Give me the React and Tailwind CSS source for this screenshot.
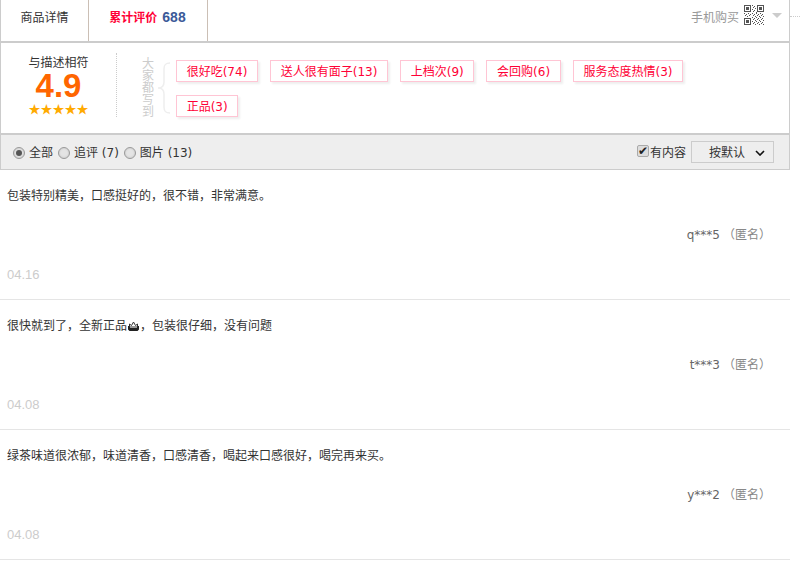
const TAGS = ['很好吃(74)', '送人很有面子(13)', '上档次(9)', '会回购(6)', '服务态度热情(3)', '正品(3)']

const REVIEWS = [
  { text: '包装特别精美，口感挺好的，很不错，非常满意。', user: 'q***5', date: '04.16' },
  { text: <>很快就到了，全新正品<Cake />，包装很仔细，没有问题</>, user: 't***3', date: '04.08' },
  { text: '绿茶味道很浓郁，味道清香，口感清香，喝起来口感很好，喝完再来买。', user: 'y***2', date: '04.08' },
]

// finder squares plus a rough scatter of modules
const QR_CELLS = [
  [8, 0], [10, 1], [9, 2], [11, 3], [8, 4], [10, 5], [9, 6], [12, 7], [0, 8], [2, 9], [4, 8], [6, 9], [8, 8], [10, 9],
  [12, 8], [14, 9], [16, 8], [18, 9], [1, 10], [3, 11], [5, 10], [9, 10], [11, 11], [13, 10], [15, 11], [17, 10], [19, 11],
  [8, 12], [10, 13], [12, 12], [14, 13], [16, 12], [18, 13], [9, 14], [11, 15], [13, 14], [15, 15], [17, 14], [19, 15],
  [8, 16], [10, 17], [12, 16], [14, 17], [16, 16], [18, 17], [9, 18], [11, 19], [13, 18], [15, 19], [17, 18], [19, 19],
]

function Cake() {
  return (
    <svg className="inline-block align-[-1px] mx-px" width="11" height="10" viewBox="0 0 11 10" fill="#222">
      <path d="M0 5h2v2h7V5h2v3.5L9.5 10h-8L0 8.5z" />
      <path d="M1.5 6V3l2 1.5L5.5 1l2 3.5 2-1.5v3z" fill="none" stroke="#333" />
    </svg>
  )
}

function QrCode() {
  const finder = (x, y) => (
    <g key={`${x}-${y}`}>
      <path d={`M${x} ${y}h7v7h-7z M${x + 1} ${y + 1}v5h5v-5z`} fillRule="evenodd" />
      <path d={`M${x + 2} ${y + 2}h3v3h-3z`} />
    </g>
  )
  return (
    <svg width="20" height="20" viewBox="0 0 20 20" fill="#555" shapeRendering="crispEdges">
      {finder(0, 0)}
      {finder(13, 0)}
      {finder(0, 13)}
      {QR_CELLS.map(([x, y]) => <rect key={`${x}:${y}`} x={x} y={y} width="1" height="1" />)}
    </svg>
  )
}

function Brace() {
  return (
    <svg width="14" height="52" viewBox="0 0 14 52" fill="none" stroke="#eee" strokeWidth="1.5">
      <path d="M13 1C8 1 7 3 7 7v13c0 4-2 6-6 6 4 0 6 2 6 6v13c0 4 1 6 6 6" />
    </svg>
  )
}

function Radio({ checked, label }) {
  return (
    <label className="flex items-center gap-[4px]">
      <span className="flex h-[12px] w-[12px] items-center justify-center rounded-full border border-[#999] bg-[#e4e4e4] shadow-[inset_0_0_2px_#bbb]">
        {checked && <span className="h-[6px] w-[6px] rounded-full bg-[#555]" />}
      </span>
      <span className="font-['DejaVu_Sans','Noto_Sans_CJK_SC',sans-serif]">{label}</span>
    </label>
  )
}

export default function App() {
  return (
    <div className="relative w-[800px] bg-white text-[12px] text-[#333] font-['Liberation_Sans','Noto_Sans_CJK_SC',sans-serif]">
      <div className="w-[790px]">

        {/* tabs */}
        <div className="flex h-[41px] items-stretch border-x border-[#ccc]">
          <div className="flex w-[88px] items-center justify-center border-r border-[#cbbfb5] pb-[6px]">商品详情</div>
          <div className="flex w-[119px] items-center justify-center gap-[5px] border-r border-[#cbbfb5] pb-[6px] pr-px font-bold text-[#ff0036]">
            累计评价 <span className="text-[14px] text-[#3b5998]">688</span>
          </div>
          <div className="ml-auto flex items-start gap-[5px] pt-[5px] pr-[7px] text-[#999]">
            <span className="mt-[4px]">手机购买</span>
            <QrCode />
            <span className="mt-[8px] ml-[3px] h-0 w-0 border-x-[5px] border-t-[5px] border-x-transparent border-t-[#ccc]" />
          </div>
        </div>

        {/* score and tag cloud */}
        <div className="flex h-[92px] border-x border-t-2 border-[#ccc] pt-[10px]">
          <div className="flex h-[64px] w-[116px] flex-col items-center border-r border-dotted border-[#ccc] pt-[2px]">
            <div className="leading-[16px]">与描述相符</div>
            <div className="text-[33px] font-bold leading-[30px] text-[#ff6600]">4.9</div>
            <div className="mt-[3px] text-[12px] leading-[12px] text-[#ffaa00]">★★★★★</div>
          </div>
          <div className="ml-[25px] mt-[5px] w-[12px] text-center text-[12px] leading-[12px] text-[#ccc]">大家都写到</div>
          <div className="ml-[3px] mt-[9px]"><Brace /></div>
          <div className="ml-[5px] flex w-[570px] flex-wrap content-start gap-x-[12px] gap-y-[13px] pt-[7px] font-['DejaVu_Sans','Noto_Sans_CJK_SC',sans-serif]">
            {TAGS.map(tag => (
              <span key={tag} className="flex h-[22px] items-center border border-[#ffc5d4] px-[9.7px] pt-px text-[#ff0036] shadow-[2px_2px_2px_#eee]">{tag}</span>
            ))}
          </div>
        </div>

        {/* filters */}
        <div className="flex h-[37px] items-center border-x border-t-2 border-b border-[#ccc] bg-[#eee] pl-[12px] pr-[15px] pt-px">
          <div className="flex items-center gap-[5px]">
            <Radio checked label="全部" />
            <Radio label="追评 (7)" />
            <Radio label="图片 (13)" />
          </div>
          <label className="ml-auto flex items-center">
            <span className="mb-[3px] flex h-[12px] w-[12px] items-center justify-center rounded-[2px] border border-[#aaa] bg-[#ddd] text-[12px] leading-none text-[#222]">✔</span>
            <span className="ml-px">有内容</span>
          </label>
          <div className="mb-px ml-[5px] flex h-[22px] w-[83px] items-center justify-between border border-[#ccc] pl-[17px] pr-[8px] pt-px">
            <span>按默认</span>
            <svg width="10" height="6" viewBox="0 0 10 6" fill="none" stroke="#111" strokeWidth="1.6"><path d="M1 1l4 4 4-4" /></svg>
          </div>
        </div>

        {/* reviews */}
        {REVIEWS.map(r => (
          <div key={r.user} className="flex h-[130px] flex-col border-b border-[#e5e5e5] pl-[7px] pr-[19px] pt-[18px]">
            <div className="leading-[16px]">{r.text}</div>
            <div className="mt-[23px] text-right leading-[16px] text-[#666] font-['DejaVu_Sans','Noto_Sans_CJK_SC',sans-serif]">{r.user}<span className="ml-[3px] text-[#888]">（匿名）</span></div>
            <div className="mt-[24px] text-[13px] leading-[16px] text-[#ccc]">{r.date}</div>
          </div>
        ))}
      </div>

      {/* dotted leader running off the right edge */}
      <div className="absolute left-[790px] top-[16px] w-[10px] border-t border-dotted border-[#ccc]" />
    </div>
  )
}
